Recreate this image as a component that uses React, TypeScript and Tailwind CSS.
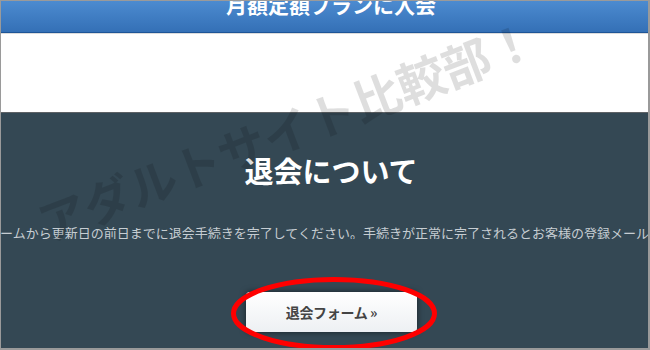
export default function App() {
  return (
    <div className="relative w-[650px] h-[350px] overflow-hidden border-t border-l border-r-2 border-b-2 border-[#9a9a9a] bg-white font-['Noto_Sans_CJK_JP',sans-serif]">
      {/* top bar */}
      <div className="h-[32px] bg-gradient-to-b from-[#4c8bd0] to-[#3470b6] border-b border-[#1e5597] overflow-hidden">
        <p className="-mt-[7px] pl-[13px] text-center text-[21px] leading-none font-bold text-white whitespace-nowrap">
          月額定額プランに入会
        </p>
      </div>
      <div className="h-px bg-[#dcdcdc]" />
      <div className="h-[79px] bg-white border-b border-[#5e6266]" />

      {/* 退会 section */}
      <section className="h-[235px] bg-[#344854] pt-[43px] flex flex-col items-center">
        <h2 className="pl-[13px] text-[29px] leading-none font-bold text-white">退会について</h2>
        <div className="mt-[41px] w-full overflow-hidden flex justify-center">
          <p className="text-[13px] leading-none text-[#c6cdd2] whitespace-nowrap">
            退会フォームから更新日の前日までに退会手続きを完了してください。手続きが正常に完了されるとお客様の登録メールアドレス
          </p>
        </div>
        <div className="mt-[53px] pl-[14px]">
          <button className="w-[171px] h-[40px] rounded-[4px] bg-gradient-to-b from-white to-[#edf0f3] shadow-[0_0_6px_rgba(0,0,0,0.55)] text-[14px] font-bold text-[#444] tracking-tight">
            退会フォーム »
          </button>
        </div>
      </section>

      {/* annotation ellipse */}
      <svg className="absolute left-[229px] top-[275px]" width="208" height="75" viewBox="0 0 208 75">
        <ellipse cx="104" cy="37.5" rx="100.5" ry="34" fill="none" stroke="#ff0000" strokeWidth="5" />
      </svg>

      {/* watermark */}
      <div className="absolute left-[285px] top-[128px] -translate-x-1/2 -translate-y-1/2 -rotate-[21deg] whitespace-nowrap text-[48px] leading-none font-bold text-[rgba(0,0,0,0.13)] pointer-events-none">
        アダルトサイト比較部！
      </div>
    </div>
  );
}
